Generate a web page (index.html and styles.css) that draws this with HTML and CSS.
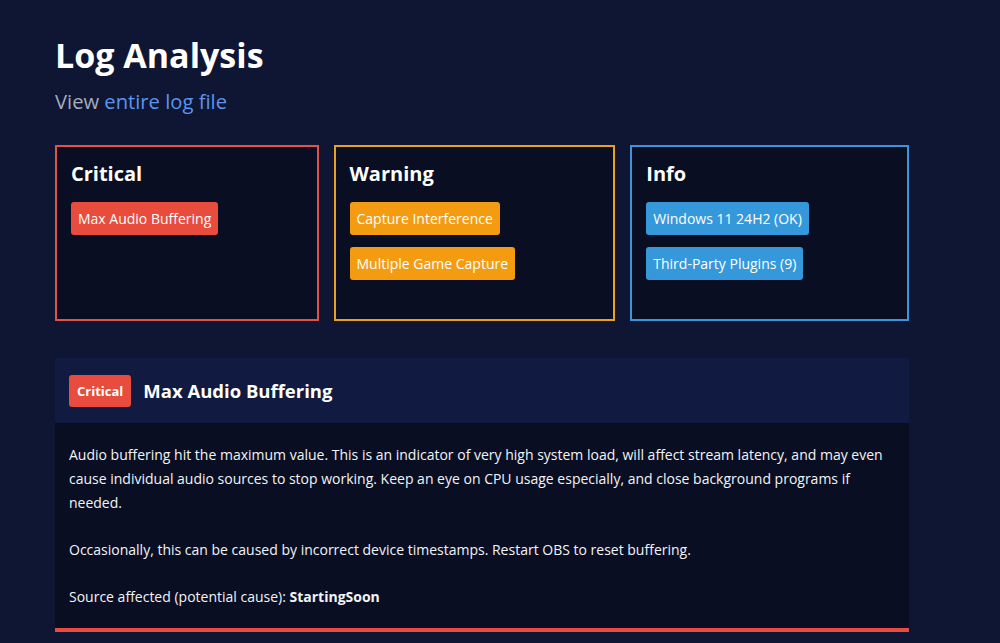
FILE: index.html
```html
<!DOCTYPE html>
<html lang="en">
<head>
<meta charset="utf-8">
<title>Log Analysis</title>
<link rel="stylesheet" href="styles.css">
</head>
<body>
<main class="page">
  <h1 class="title">Log Analysis</h1>
  <p class="subtitle">View <a class="link" href="#">entire log file</a></p>

  <section class="summary">
    <div class="card card-critical">
      <h2 class="card-title">Critical</h2>
      <span class="tag tag-critical">Max Audio Buffering</span>
    </div>
    <div class="card card-warning">
      <h2 class="card-title">Warning</h2>
      <span class="tag tag-warning">Capture Interference</span>
      <span class="tag tag-warning">Multiple Game Capture</span>
    </div>
    <div class="card card-info">
      <h2 class="card-title">Info</h2>
      <span class="tag tag-info">Windows 11 24H2 (OK)</span>
      <span class="tag tag-info">Third-Party Plugins (9)</span>
    </div>
  </section>

  <section class="detail detail-critical">
    <header class="detail-head">
      <span class="badge">Critical</span>
      <h3 class="detail-title">Max Audio Buffering</h3>
    </header>
    <div class="detail-body">
      <p>Audio buffering hit the maximum value. This is an indicator of very high system load, will affect stream latency, and may even cause individual audio sources to stop working. Keep an eye on CPU usage especially, and close background programs if needed.</p>
      <p>Occasionally, this can be caused by incorrect device timestamps. Restart OBS to reset buffering.</p>
      <p>Source affected (potential cause): <strong>StartingSoon</strong></p>
    </div>
  </section>
</main>
</body>
</html>
```

FILE: styles.css
```css
html, body {
  margin: 0;
  padding: 0;
  background: #0e1633;
  color: #ffffff;
  font-family: "Open Sans", "Noto Sans", sans-serif;
}

.page {
  width: 854px;
  padding: 33px 0 0 55px;
}

.title {
  margin: 0;
  font-size: 34px;
  font-weight: 700;
  line-height: 44px;
  color: #ffffff;
}

.subtitle {
  margin: 11px 0 0;
  font-size: 20.2px;
  line-height: 27px;
  color: #a3abbd;
}

.link {
  color: #5d93f0;
  text-decoration: none;
}

.summary {
  display: flex;
  gap: 15px;
  margin-top: 30px;
}

.card {
  flex: 1 1 auto;
  display: flex;
  flex-direction: column;
  align-items: flex-start;
  gap: 12px;
  background: #090e22;
  border: 2px solid;
  padding: 12px 14px 39px;
}

.card-critical { border-color: #e0514a; }
.card-warning { border-color: #e9a11f; }
.card-info { border-color: #3d94db; }

.card-title {
  margin: 0 0 1px;
  font-size: 20px;
  font-weight: 700;
  line-height: 30px;
}

.tag {
  display: inline-block;
  padding: 6px 7px;
  border-radius: 3px;
  font-size: 14px;
  line-height: 21px;
  color: #ffffff;
}

.tag-critical { background: #e74c3c; }
.tag-warning { background: #f39c12; }
.tag-info { background: #3498db; }

.detail {
  margin-top: 37px;
  background: #090e22;
  border-bottom: 4px solid #e74c3c;
}

.detail-head {
  display: flex;
  align-items: center;
  gap: 12px;
  height: 65px;
  padding: 0 14px;
  background: #111a40;
}

.badge {
  display: inline-block;
  padding: 6px 8px;
  border-radius: 3px;
  background: #e74c3c;
  font-size: 13px;
  font-weight: 700;
  line-height: 20px;
}

.detail-title {
  margin: 0;
  font-size: 18.5px;
  font-weight: 700;
  line-height: 26px;
}

.detail-body {
  padding: 20px 14px 19px;
  font-size: 14px;
  line-height: 24px;
  color: #f2f4f8;
}

.detail-body p {
  margin: 0 0 23px;
}

.detail-body p:last-child {
  margin-bottom: 0;
}

.detail-body strong {
  font-weight: 700;
}
```
